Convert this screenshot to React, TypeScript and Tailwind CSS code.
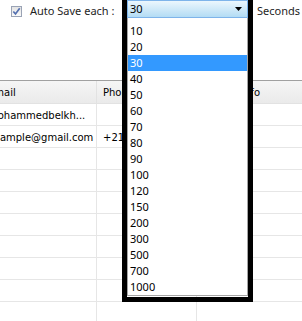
import React from "react";

const items = ["10","20","30","40","50","60","70","80","90","100","120","150","200","300","500","700","1000"];

const rows: [string, string, string][] = [
  ["mohammedbelkh...", "", ""],
  ["example@gmail.com", "+213 555 12 34 56", ""],
  ["", "", ""],
  ["", "", ""],
  ["", "", ""],
  ["", "", ""],
  ["", "", ""],
  ["", "", ""],
  ["", "", ""],
];

export default function App() {
  return (
    <div className="relative w-[302px] h-[321px] bg-white overflow-hidden flex flex-col" style={{ fontFamily: '"Noto Sans", sans-serif' }}>
      {/* toolbar */}
      <div className="relative z-10 flex items-start h-[20px] pl-[11px] text-[11px] text-[#1e1e1e]">
        <div className="mt-[6px] w-[11px] h-[11px] border border-[#9aa3b5] bg-gradient-to-b from-[#e4e4e4] to-[#fafafa] flex items-center justify-center">
          <svg width="9" height="9" viewBox="0 0 9 9">
            <path d="M1.3 4.5 L3.5 6.9 L7.7 1.3" fill="none" stroke="#5470b0" strokeWidth="1.7" />
          </svg>
        </div>
        <span className="ml-[8px] w-[97px] leading-[14px] mt-[4px]">Auto Save each :</span>
        <div className="relative w-[121px] h-[18px]">
          <div className="h-[18px] border border-[#7eb4ea] bg-gradient-to-b from-[#ecf7fd] to-[#b3dcf4] flex items-center justify-between pl-[2px] pr-[5px] text-black leading-none">
            <span className="-mt-[1px]">30</span>
            <svg width="7" height="4" viewBox="0 0 7 4"><path d="M0 0 H7 L3.5 4 Z" fill="#000" /></svg>
          </div>
          <div className="absolute left-0 top-full w-full bg-white border-x border-b border-[#a5a5a5] pt-[5px]">
            {items.map((v) => (
              <div
                key={v}
                className={
                  v === "30"
                    ? "h-[16px] leading-[16px] pl-[2px] bg-[#3399ff] text-white"
                    : "h-[16px] leading-[16px] pl-[2px] text-black"
                }
              >
                {v}
              </div>
            ))}
          </div>
          <div className="absolute -left-[5px] -top-[5px] w-[131px] h-[307px] border-[5px] border-black pointer-events-none" />
        </div>
        <span className="ml-[9px] leading-[14px] mt-[4px]">Seconds</span>
      </div>

      {/* table */}
      <div className="mt-[60px] -ml-[18px] flex-1 flex flex-col text-[10px] text-black" style={{ fontFamily: '"DejaVu Sans", sans-serif' }}>
        <div className="grid grid-cols-[115px_100px_1fr] h-[24px] border-t border-[#a0a0a0] bg-gradient-to-b from-[#f5f5f5] to-[#eaeaea] border-b border-b-[#e2e2e2]">
          <div className="pl-[6px] pt-[1px] flex items-center border-r border-[#e2e2e2] whitespace-nowrap overflow-hidden">Email</div>
          <div className="pl-[6px] pt-[1px] flex items-center border-r border-[#e2e2e2] whitespace-nowrap overflow-hidden">Phone</div>
          <div className="pl-[2px] pt-[1px] flex items-center whitespace-nowrap overflow-hidden">Contact Info</div>
        </div>
        {rows.map((r, i) => (
          <div key={i} className="grid grid-cols-[115px_100px_1fr] h-[22px] border-b border-[#e6e6e6]">
            <div className="pl-[6px] pt-[1px] flex items-center border-r border-[#e6e6e6] whitespace-nowrap overflow-hidden">{r[0]}</div>
            <div className="pl-[6px] pt-[1px] flex items-center border-r border-[#e6e6e6] whitespace-nowrap overflow-hidden">{r[1]}</div>
            <div className="pl-[5px] pt-[1px] flex items-center whitespace-nowrap overflow-hidden">{r[2]}</div>
          </div>
        ))}
        <div className="flex-1 grid grid-cols-[115px_100px_1fr]">
          <div className="border-r border-[#e6e6e6]" />
          <div className="border-r border-[#e6e6e6]" />
          <div />
        </div>
      </div>
    </div>
  );
}
